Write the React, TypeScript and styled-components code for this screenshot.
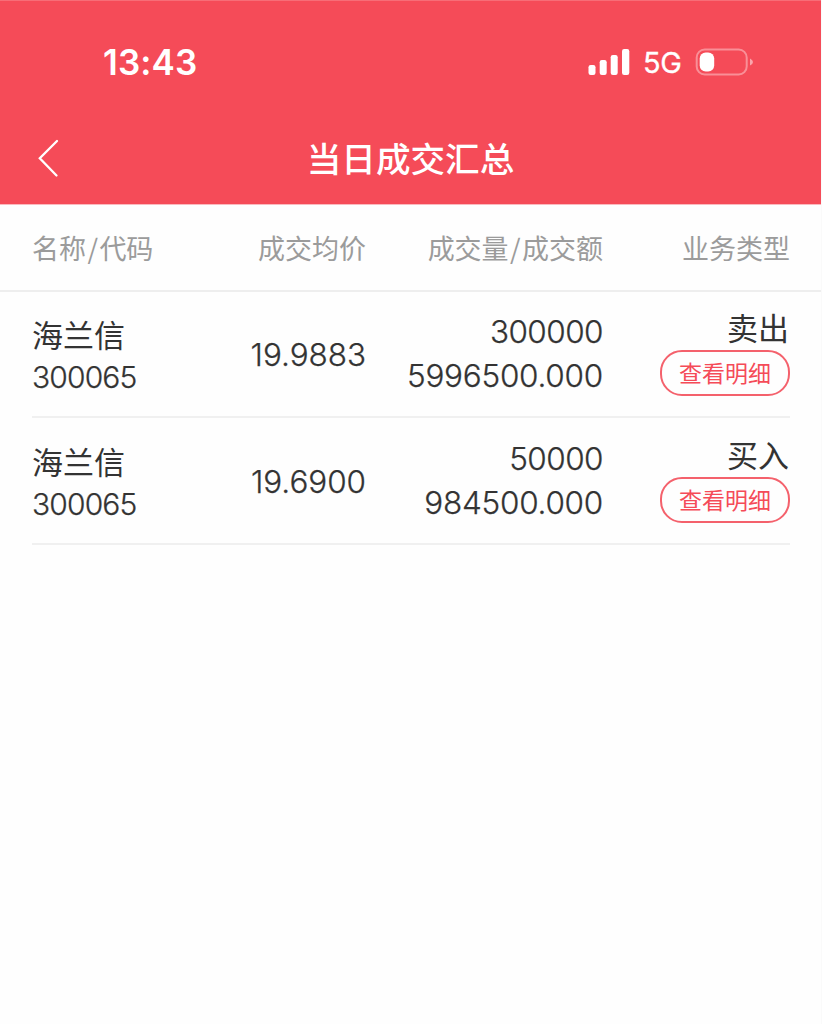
import React from "react";
import styled, { createGlobalStyle } from "styled-components";

const Global = createGlobalStyle`
  * { box-sizing: border-box; }
  body { margin: 0; background: #fefefe; }
`;

const CJK = `"Noto Sans CJK SC", sans-serif`;
const LATIN = `Inter, "Liberation Sans", sans-serif`;

const Screen = styled.div`
  width: 822px;
  height: 1024px;
  background: #fefefe;
  border-right: 1px solid #fafafa;
  font-family: ${CJK};
  color: #333;
  overflow: hidden;
`;

const Header = styled.header`
  height: 205px;
  background: #f54b58;
  border-top: 1px solid #f76d77;
  border-bottom: 1px solid #fbb9be;
  color: #fff;
`;

const StatusBar = styled.div`
  height: 112px;
  padding: 10px 67px 0 103px;
  display: flex;
  align-items: center;
  justify-content: space-between;
`;

const Time = styled.span`
  font: 570 35px/40px ${LATIN};
  letter-spacing: 0.1px;
`;

const Indicators = styled.div`
  display: flex;
  align-items: center;
`;

const Network = styled.span`
  font: 430 29px/40px ${LATIN};
  -webkit-text-stroke: 0.3px #fff;
  letter-spacing: -0.3px;
  width: 39px;
  margin: 0 13px;
  padding-top: 2px;
  white-space: nowrap;
`;

const NavBar = styled.div`
  height: 89px;
  padding: 0 36px;
  display: grid;
  grid-template-columns: 26px 1fr 26px;
  align-items: center;
`;

const Title = styled.h1`
  margin: -2px 0 0;
  text-align: center;
  font: 500 34.6px/50px ${CJK};
`;

const columns = `
  display: grid;
  grid-template-columns: 160px 174px 237px 187px;
`;

const TableHead = styled.div`
  ${columns}
  height: 87px;
  padding: 0 31px 0 32px;
  border-bottom: 2px solid #eeeeee;
  align-items: center;
  font-size: 27px;
  line-height: 40px;
  color: #9b9b9b;
`;

const HeadCell = styled.span<{ $start?: boolean }>`
  text-align: ${(p) => (p.$start ? "left" : "right")};
  white-space: nowrap;
`;

const Slash = styled.span`
  margin: 0 1.4px;
`;

const Rows = styled.div`
  padding: 0 31px 0 32px;
`;

const Row = styled.div`
  ${columns}
  height: 126px;
  border-bottom: 2px solid #f0f0f0;

  & + & {
    height: 127px;
    padding-top: 1px;
  }
`;

const NameCell = styled.div`
  display: flex;
  flex-direction: column;
  padding-top: 21px;
`;

const StockName = styled.span`
  font-size: 31px;
  line-height: 42px;
`;

const Num = styled.span<{ $size?: number; $track: number }>`
  font-family: ${LATIN};
  font-weight: 300;
  -webkit-text-stroke: 0.25px #333;
  font-size: ${(p) => p.$size ?? 31.5}px;
  line-height: 44px;
  letter-spacing: ${(p) => p.$track}px;
  white-space: nowrap;
`;

const PriceCell = styled.div`
  text-align: right;
  padding-top: 41px;
`;

const AmountCell = styled.div`
  display: flex;
  flex-direction: column;
  align-items: flex-end;
  padding-top: 18px;
`;

const TypeCell = styled.div`
  display: flex;
  flex-direction: column;
  align-items: flex-end;
  padding-top: 13px;
`;

const TradeType = styled.span`
  font-size: 31px;
  line-height: 44px;
  padding-right: 1px;
`;

const DetailButton = styled.button`
  width: 130px;
  height: 46px;
  padding: 0 0 2px;
  margin-top: 1px;
  border: 2px solid #f4616c;
  border-radius: 22px;
  background: transparent;
  color: #f54b58;
  font: 400 23px/40px ${CJK};
`;

const Signal = () => (
  <svg width="42" height="28" viewBox="0 0 42 28" fill="#fff">
    <rect x="0.5" y="17" width="7" height="10" rx="2.2" />
    <rect x="11.7" y="12" width="7" height="15" rx="2.2" />
    <rect x="22.7" y="7" width="7" height="20" rx="2.2" />
    <rect x="34" y="1" width="7.3" height="26" rx="2.2" />
  </svg>
);

const Battery = () => (
  <svg width="59" height="28" viewBox="0 0 59 28">
    <rect x="1.7" y="1.5" width="50" height="25" rx="8" fill="none" stroke="#fff" strokeOpacity=".38" strokeWidth="2" />
    <rect x="4.7" y="4.5" width="14.5" height="19" rx="6" fill="#fff" />
    <path d="M55 10.5 Q58 12 58 14 T55 17.5 Z" fill="#fff" fillOpacity=".5" />
  </svg>
);

const Back = () => (
  <svg width="26" height="40" viewBox="0 0 26 40" fill="none" stroke="#fff" strokeWidth="2.3" strokeLinecap="round">
    <path d="M21 3 L3.8 20.3 L20.5 37.5" />
  </svg>
);

const trades = [
  { name: "海兰信", code: "300065", price: "19.9883", volume: "300000", amount: "5996500.000", type: "卖出" },
  { name: "海兰信", code: "300065", price: "19.6900", volume: "50000", amount: "984500.000", type: "买入" },
];

export default function App() {
  return (
    <Screen>
      <Global />
      <Header>
        <StatusBar>
          <Time>13:43</Time>
          <Indicators>
            <Signal />
            <Network>5G</Network>
            <Battery />
          </Indicators>
        </StatusBar>
        <NavBar>
          <Back />
          <Title>当日成交汇总</Title>
        </NavBar>
      </Header>
      <TableHead>
        <HeadCell $start>名称<Slash>/</Slash>代码</HeadCell>
        <HeadCell>成交均价</HeadCell>
        <HeadCell>成交量<Slash>/</Slash>成交额</HeadCell>
        <HeadCell>业务类型</HeadCell>
      </TableHead>
      <Rows>
        {trades.map((t) => (
          <Row key={t.price}>
            <NameCell>
              <StockName>{t.name}</StockName>
              <Num $size={30} $track={-0.85}>{t.code}</Num>
            </NameCell>
            <PriceCell>
              <Num $track={-0.05}>{t.price}</Num>
            </PriceCell>
            <AmountCell>
              <Num $track={-0.55}>{t.volume}</Num>
              <Num $track={-0.25}>{t.amount}</Num>
            </AmountCell>
            <TypeCell>
              <TradeType>{t.type}</TradeType>
              <DetailButton>查看明细</DetailButton>
            </TypeCell>
          </Row>
        ))}
      </Rows>
    </Screen>
  );
}
